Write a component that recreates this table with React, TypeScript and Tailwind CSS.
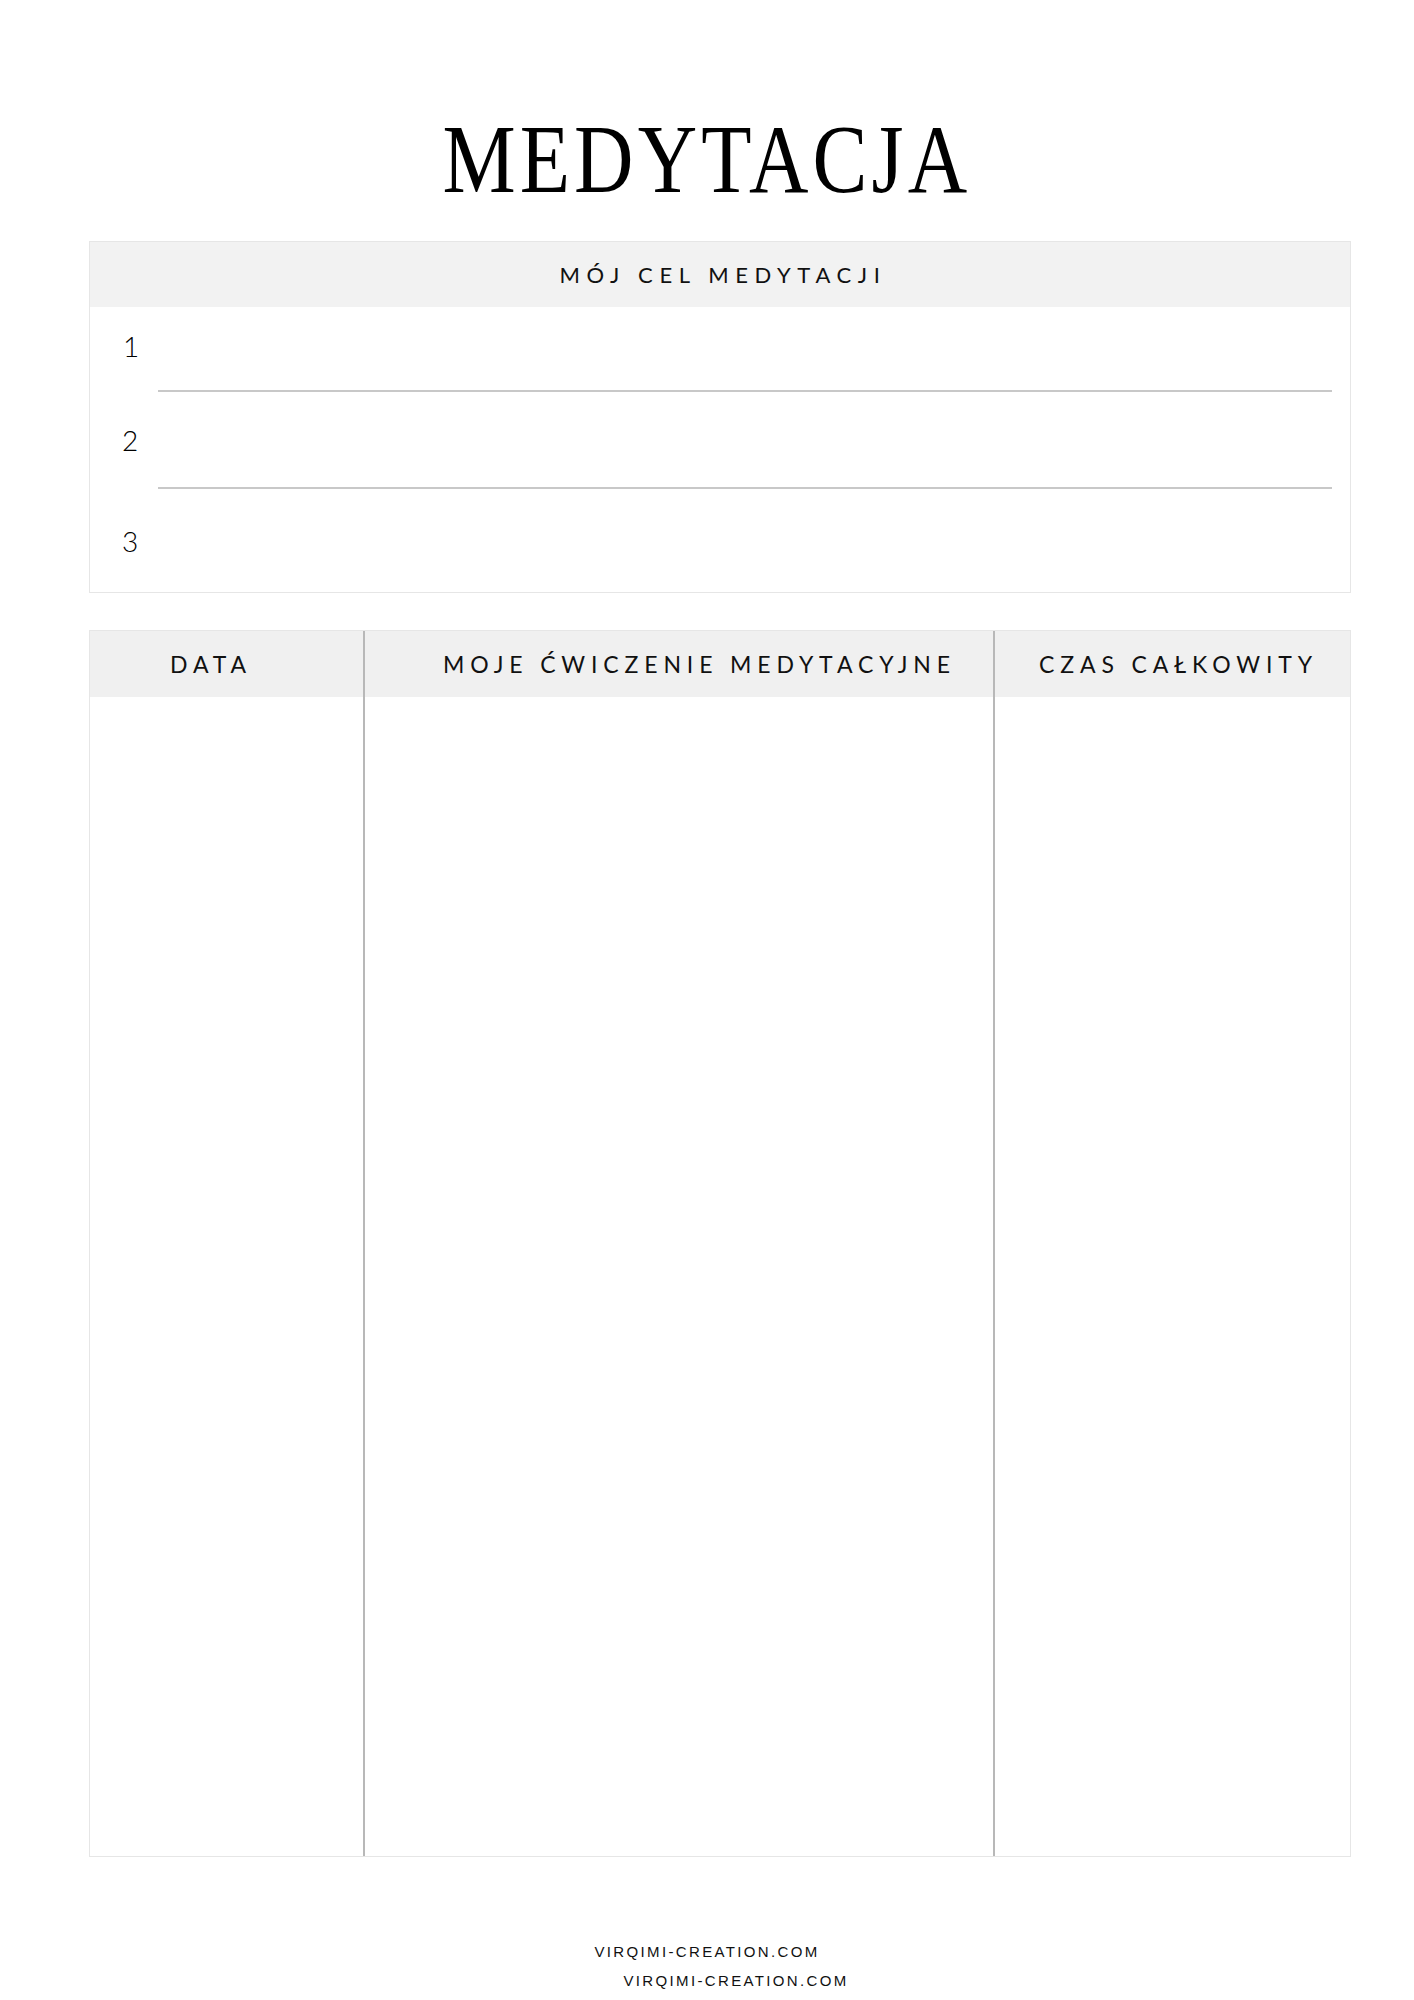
import React from "react";

const sans = { fontFamily: "Lato, 'Open Sans', sans-serif" };

export default function App() {
  return (
    <div className="w-[1414px] h-[2000px] bg-white flex flex-col text-black overflow-hidden">
      {/* Title */}
      <div className="pt-[110px] flex justify-center">
        <h1
          className="text-[98px] leading-none tracking-[0.05em] scale-x-[0.84] font-normal"
          style={{ fontFamily: "'Liberation Serif', 'DejaVu Serif', serif" }}
        >
          MEDYTACJA
        </h1>
      </div>

      {/* Goals box */}
      <div className="mt-[33px] ml-[89px] w-[1262px] border border-[#e6e6e6] flex flex-col" style={sans}>
        <div className="h-[65px] bg-[#f2f2f2] flex items-center justify-center">
          <span className="text-[22px] font-normal tracking-[0.3em] text-[#111] ml-[6px]">MÓJ CEL MEDYTACJI</span>
        </div>
        <div className="h-[83px] flex items-center pl-[33px] pb-[6px]">
          <span className="text-[28px] font-light leading-none">1</span>
        </div>
        <div className="ml-[68px] mr-[18px] h-[2px] bg-[#c8c8c8]" />
        <div className="h-[95px] flex items-center pl-[32px]">
          <span className="text-[28px] font-light leading-none">2</span>
        </div>
        <div className="ml-[68px] mr-[18px] h-[2px] bg-[#c8c8c8]" />
        <div className="h-[103px] flex items-center pl-[32px]">
          <span className="text-[28px] font-light leading-none">3</span>
        </div>
      </div>

      {/* Table */}
      <div
        className="mt-[37px] ml-[89px] w-[1262px] h-[1227px] border border-[#e6e6e6] grid grid-cols-[273px_630px_1fr]"
        style={sans}
      >
        <div className="flex flex-col">
          <div className="h-[66px] bg-[#f0f0f0] flex items-center pl-[80px]">
            <span className="text-[23px] font-normal tracking-[0.255em] text-[#111]">DATA</span>
          </div>
          <div className="flex-1" />
        </div>
        <div className="flex flex-col border-l-2 border-[#b8b8b8]">
          <div className="h-[66px] bg-[#f0f0f0] flex items-center pl-[78px]">
            <span className="text-[23px] font-normal tracking-[0.255em] text-[#111]">MOJE ĆWICZENIE MEDYTACYJNE</span>
          </div>
          <div className="flex-1" />
        </div>
        <div className="flex flex-col border-l-2 border-[#b8b8b8]">
          <div className="h-[66px] bg-[#f0f0f0] flex items-center pl-[44px]">
            <span className="text-[23px] font-normal tracking-[0.255em] text-[#111]">CZAS CAŁKOWITY</span>
          </div>
          <div className="flex-1" />
        </div>
      </div>

      {/* Footer */}
      <div
        className="mt-[80px] flex flex-col items-center text-[15px] leading-[29px] tracking-[0.157em] text-[#111]"
        style={{ fontFamily: "'Liberation Sans', Arial, sans-serif" }}
      >
        <span>VIRQIMI-CREATION.COM</span>
        <span className="ml-[58px]">VIRQIMI-CREATION.COM</span>
      </div>
    </div>
  );
}
